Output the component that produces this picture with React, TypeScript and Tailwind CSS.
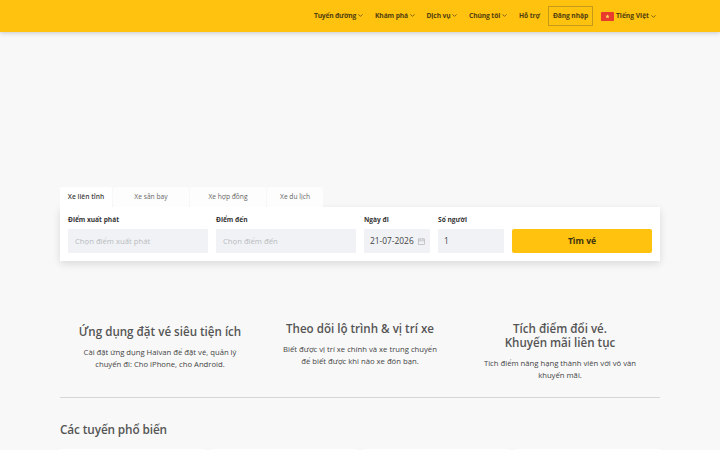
import React, { Fragment } from 'react';
import { ChevronDown } from 'lucide-react';

const menu = [
    { label: 'Tuyến đường', width: 'w-[43px]', tracking: 'tracking-[-0.2px]' },
    { label: 'Khám phá', width: 'w-[33.5px]', tracking: '' },
    { label: 'Dịch vụ', width: 'w-[24.5px]', tracking: '' },
    { label: 'Chúng tôi', width: 'w-[32px]', tracking: '' },
];

const tabs = [
    { label: 'Xe liên tỉnh', style: 'w-[52px] bg-white font-semibold text-[#3f3f3f]' },
    { label: 'Xe sân bay', style: 'w-[76px] bg-[#fdfdfd]' },
    { label: 'Xe hợp đồng', style: 'w-[76px] bg-[#fdfdfd]' },
    { label: 'Xe du lịch', style: 'w-[56px] bg-[#fdfdfd]' },
];

const features = [
    {
        title: ['Ứng dụng đặt vé siêu tiện ích'],
        text: ['Cài đặt ứng dụng Haivan để đặt vé, quản lý', 'chuyến đi: Cho iPhone, cho Android.'],
        offset: 'pt-[3.5px]',
    },
    {
        title: ['Theo dõi lộ trình & vị trí xe'],
        text: ['Biết được vị trí xe chính và xe trung chuyển', 'để biết được khi nào xe đón bạn.'],
        offset: '',
    },
    {
        title: ['Tích điểm đổi vé.', 'Khuyến mãi liên tục'],
        text: ['Tích điểm nâng hạng thành viên với vô vàn', 'khuyến mãi.'],
        offset: '',
    },
];

const Header = () => (
    <header className="h-8 bg-[#ffc20e] shadow-[0_1px_5px_rgba(0,0,0,0.2)]">
        <nav className="flex h-8 items-center pl-[314px] text-[6.7px] font-bold tracking-[-0.1px] text-[#50400f]">
            {menu.map(item => (
                <div key={item.label} className="mr-[11px] flex items-center">
                    <span className={`${item.width} ${item.tracking}`}>{item.label}</span>
                    <ChevronDown className="size-[7px]" strokeWidth={2.5} />
                </div>
            ))}
            <span className="w-[29px]">Hỗ trợ</span>
            <button className="h-5 w-[45px] border border-[#c69a18] font-bold">Đăng nhập</button>
            <svg viewBox="0 0 24 16" className="ml-[8px] mr-[2px] h-[9px] w-[13px]" preserveAspectRatio="none">
                <rect width="24" height="16" rx="1.5" fill="#e83b2e" />
                <path d="M12 4l1 2.8h3l-2.4 1.8.9 2.9-2.5-1.8-2.5 1.8.9-2.9L8 6.8h3z" fill="#ffe45c" />
            </svg>
            <span className="w-[34px] tracking-normal">Tiếng Việt</span>
            <ChevronDown className="size-[7px]" strokeWidth={2.5} />
        </nav>
    </header>
);

interface FieldProps {
    label: string;
    width: string;
    children: React.ReactNode;
}

const Field: React.FC<FieldProps> = ({ label, width, children }) => (
    <div className={width}>
        <div className="h-[14px] text-[6.6px] leading-[10px] font-bold text-[#333]">{label}</div>
        <div className="flex h-6 items-center rounded-[1px] bg-[#f0f2f5] text-[#444]">{children}</div>
    </div>
);

const CalendarIcon = () => (
    <svg viewBox="0 0 7 7" className="size-[7px]" fill="none" stroke="#b5b5b8" strokeWidth="0.7">
        <rect x="0.5" y="1" width="6" height="5.5" />
        <path d="M0.5 2.8h6M2 0.2v1.4M5 0.2v1.4" />
    </svg>
);

const SearchForm = () => (
    <section className="mt-[155px]">
        <div className="flex gap-[1px] text-[6.7px] text-[#666]">
            {tabs.map(tab => (
                <div key={tab.label} className={`flex h-5 items-center justify-center rounded-t-[2px] ${tab.style}`}>
                    {tab.label}
                </div>
            ))}
        </div>
        <div className="flex h-[54.4px] gap-2 bg-white px-2 pt-[8.4px] shadow-[0_3px_8px_rgba(0,0,0,0.12)]">
            <Field label="Điểm xuất phát" width="w-[140px]">
                <span className="pt-[1px] pl-[7px] text-[7.7px] text-[#b9bbc0]">Chọn điểm xuất phát</span>
            </Field>
            <Field label="Điểm đến" width="w-[140px]">
                <span className="pt-[1px] pl-[7px] text-[7.7px] text-[#b9bbc0]">Chọn điểm đến</span>
            </Field>
            <Field label="Ngày đi" width="w-[66px]">
                <span className="w-[53.5px] pl-[6px] text-[8.4px]">21-07-2026</span>
                <CalendarIcon />
            </Field>
            <Field label="Số người" width="w-[66px]">
                <span className="pl-[6px] text-[8.4px]">1</span>
            </Field>
            <button className="mt-[14px] h-6 w-[140px] rounded-[2px] bg-[#ffc20e] pt-[1px] text-[8.6px] font-bold text-[#40340f]">
                Tìm vé
            </button>
        </div>
    </section>
);

export default function App() {
    return (
        <div className="h-[450px] overflow-hidden bg-[#f8f8f8] font-['Open_Sans','Noto_Sans',sans-serif] whitespace-nowrap">
            <Header />
            <main className="mx-auto w-[600px]">
                <SearchForm />
                <section className="grid h-[137px] grid-cols-3 border-b border-[#d6d6d6] pt-[60.2px] text-center">
                    {features.map(item => (
                        <div key={item.title[0]} className={item.offset}>
                            <h3 className="text-[11.6px] leading-[14px] font-semibold text-[#555]">
                                {item.title.map((line, i) => (
                                    <Fragment key={line}>
                                        {i > 0 && <br />}
                                        {line}
                                    </Fragment>
                                ))}
                            </h3>
                            <p className="mt-[7.3px] text-[7.7px] leading-[12px] text-[#444]">
                                {item.text.map(line => <span key={line} className="block">{line}</span>)}
                            </p>
                        </div>
                    ))}
                </section>
                <h2 className="mt-[22.8px] text-[11.8px] leading-4 font-semibold tracking-[-0.12px] text-[#555]">Các tuyến phổ biến</h2>
                <div className="mt-[11.8px] grid grid-cols-4 gap-2">
                    <div className="h-4 rounded-[2px] bg-white" />
                    <div className="h-4 rounded-[2px] bg-white" />
                    <div className="h-4 rounded-[2px] bg-white" />
                    <div className="h-4 rounded-[2px] bg-white" />
                </div>
            </main>
        </div>
    );
}
